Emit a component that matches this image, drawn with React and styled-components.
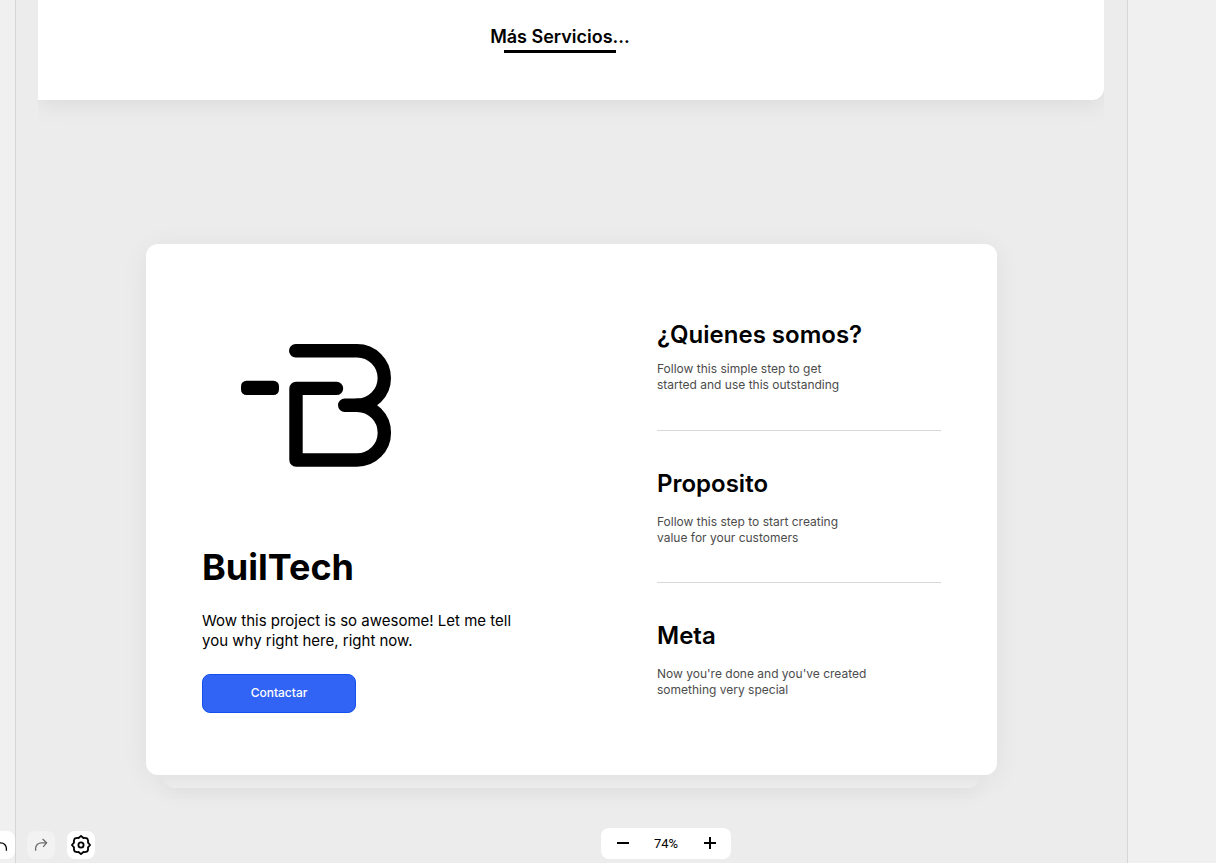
import React from "react";
import styled, { createGlobalStyle } from "styled-components";

const GlobalStyle = createGlobalStyle`
  * { box-sizing: border-box; }
  body {
    margin: 0;
    background: #f0f0f0;
    color: #000;
    font-family: Inter, "Liberation Sans", sans-serif;
  }
  h1, h2, p { margin: 0; }
  button { font-family: inherit; cursor: pointer; }
`;

const Workspace = styled.div`
  position: relative;
  min-height: 100vh;
  padding: 0 88px 0 15px;
  overflow: hidden;
`;

const Artboard = styled.main`
  min-height: 100vh;
  padding: 0 23px 75px 22px;
  background: #ececec;
  border: solid #d6d6d6;
  border-width: 0 1px;
`;

const PanelClip = styled.div`
  height: 144px;
  overflow: hidden;
`;

const ServicesPanel = styled.section`
  display: flex;
  justify-content: center;
  height: 100px;
  padding: 23px 22px 0 0;
  background: #fff;
  border-radius: 0 0 12px 0;
  box-shadow: 0 4px 24px rgba(0, 0, 0, 0.08);
`;

const ServicesLink = styled.a`
  display: flex;
  flex-direction: column;
  align-items: center;
  height: 30px;
  color: #000;
  font-size: 18px;
  font-weight: 600;
  line-height: 27px;
  text-decoration: none;
  white-space: nowrap;

  &::after {
    content: "";
    flex: none;
    width: 112px;
    height: 3px;
    background: #000;
  }
`;

const CardStack = styled.div`
  margin: 100px 107px 0 108px;
`;

const Card = styled.section`
  position: relative;
  display: grid;
  grid-template-columns: minmax(0, 1fr) 284px;
  min-height: 531px;
  padding: 0 56px;
  background: #fff;
  border-radius: 12px;
  box-shadow: 0 4px 28px rgba(0, 0, 0, 0.06);
`;

const CardShelf = styled.div`
  position: relative;
  height: 13px;
  margin: 0 17px;
  background: linear-gradient(#e4e4e4, #ececec);
  border-radius: 0 0 12px 12px;
  box-shadow: 0 6px 20px rgba(0, 0, 0, 0.06);
  clip-path: inset(0 -40px -40px);
`;

const Brand = styled.div`
  display: flex;
  flex-direction: column;
  align-items: flex-start;
  padding-top: 100px;
`;

const Logo = styled.svg`
  width: 152px;
  height: 124px;
  margin-left: 39px;
`;

const BrandName = styled.h1`
  margin-top: 75px;
  font-size: 36px;
  font-weight: 700;
  line-height: 48px;
`;

const Pitch = styled.p`
  max-width: 320px;
  margin-top: 20px;
  font-size: 15px;
  line-height: 20px;
`;

const ContactButton = styled.button`
  width: 154px;
  height: 39px;
  margin-top: 23px;
  padding: 0 0 2px;
  color: #fff;
  background: #3164f4;
  border: 1px solid #1450f0;
  border-radius: 8px;
  font-size: 12px;
  font-weight: 500;
`;

const Topics = styled.div`
  padding-top: 73px;
`;

const Topic = styled.article`
  height: 152px;
  border-bottom: ${({ $last }) => ($last ? "0" : "1px solid #d8d8d8")};

  &:first-child { height: 114px; }
  &:first-child h2 { padding-top: 0; }
  &:first-child p { margin-top: 8px; }
`;

const TopicTitle = styled.h2`
  padding-top: 35px;
  font-size: 24px;
  font-weight: 600;
  line-height: 36px;
  white-space: nowrap;
`;

const TopicText = styled.p`
  max-width: 215px;
  margin-top: 12px;
  color: #4c4c4c;
  font-size: 12px;
  line-height: 16px;
`;

const HistoryBar = styled.div`
  position: absolute;
  bottom: 4px;
  left: -13px;
  display: flex;
  gap: 12px;
`;

const ToolButton = styled.button`
  display: grid;
  place-items: center;
  width: 28px;
  height: 28px;
  padding: 0;
  color: ${({ disabled }) => (disabled ? "#6c6c6c" : "#000")};
  background: ${({ disabled }) => (disabled ? "#f2f2f2" : "#fff")};
  border: 0;
  border-radius: 8px;
`;

const ZoomBar = styled.div`
  position: absolute;
  bottom: 4px;
  left: calc(50% + 58px);
  display: grid;
  grid-template-columns: 43px 1fr 43px;
  align-items: center;
  width: 130px;
  height: 31px;
  transform: translateX(-50%);
  background: #fff;
  border-radius: 8px;
`;

const ZoomButton = styled.button`
  display: grid;
  place-items: center;
  height: 31px;
  padding: 0 0 1px;
  background: none;
  border: 0;
`;

const ZoomValue = styled.output`
  font-family: Roboto, "Liberation Sans", sans-serif;
  font-size: 13px;
  line-height: 16px;
  text-align: center;
`;

const strokeProps = { fill: "none", stroke: "currentColor" };

function RedoIcon({ flipped }) {
  return (
    <svg width="20" height="20" viewBox="0 0 20 20" {...strokeProps} strokeWidth="1.3" aria-hidden="true">
      <g transform={flipped ? "matrix(-1 0 0 1 20 0)" : undefined}>
        <path d="M4.6 15.8V13.6C4.6 10.2 7 7.8 10.5 7.8H15.5M11.6 4 15.6 7.8 12.2 11.8" />
      </g>
    </svg>
  );
}

function GearIcon() {
  return (
    <svg width="22" height="22" viewBox="0 0 22 22" {...strokeProps} strokeWidth="1.8" strokeLinejoin="round" aria-hidden="true">
      <path d="M11 1.9 13.4 4Q15.4 3.6 17.4 4.6Q18.4 6.6 18 8.6L20.1 11 18 13.4Q18.4 15.4 17.4 17.4Q15.4 18.4 13.4 18L11 20.1 8.6 18Q6.6 18.4 4.6 17.4Q3.6 15.4 4 13.4L1.9 11 4 8.6Q3.6 6.6 4.6 4.6Q6.6 3.6 8.6 4Z" />
      <circle cx="11" cy="11" r="2.6" />
    </svg>
  );
}

const topics = [
  { title: "¿Quienes somos?", lines: ["Follow this simple step to get", "started and use this outstanding"] },
  { title: "Proposito", lines: ["Follow this step to start creating", "value for your customers"] },
  { title: "Meta", lines: ["Now you're done and you've created", "something very special"] },
];

export default function App() {
  return (
    <>
      <GlobalStyle />
      <Workspace>
        <Artboard>
          <PanelClip>
            <ServicesPanel>
              <ServicesLink href="#servicios">Más Servicios...</ServicesLink>
            </ServicesPanel>
          </PanelClip>
          <CardStack>
            <Card>
              <Brand>
                <Logo viewBox="0 0 152 124" role="img" aria-label="BuilTech">
                  <g fill="none" stroke="#000" strokeWidth="13.4" strokeLinecap="round" strokeLinejoin="round">
                    <path d="M54.7 6.7H116A27.3 27.3 0 0 1 116 61.3H103.7" />
                    <path d="M116 61.3A27.3 27.3 0 0 1 116 116H55V44.4H95.5" />
                  </g>
                  <rect x="0" y="36.7" width="38" height="14.3" rx="5.5" />
                </Logo>
                <BrandName>BuilTech</BrandName>
                <Pitch>Wow this project is so awesome! Let me tell<br />you why right here, right now.</Pitch>
                <ContactButton type="button">Contactar</ContactButton>
              </Brand>
              <Topics>
                {topics.map(({ title, lines }, index) => (
                  <Topic key={title} $last={index === topics.length - 1}>
                    <TopicTitle>{title}</TopicTitle>
                    <TopicText>{lines[0]}<br />{lines[1]}</TopicText>
                  </Topic>
                ))}
              </Topics>
            </Card>
            <CardShelf />
          </CardStack>
        </Artboard>
        <HistoryBar>
          <ToolButton type="button" aria-label="Deshacer"><RedoIcon flipped /></ToolButton>
          <ToolButton type="button" aria-label="Rehacer" disabled><RedoIcon /></ToolButton>
          <ToolButton type="button" aria-label="Ajustes"><GearIcon /></ToolButton>
        </HistoryBar>
        <ZoomBar>
          <ZoomButton type="button" aria-label="Alejar">
            <svg width="12" height="12" viewBox="0 0 12 12" aria-hidden="true"><path d="M0 5h12v2H0z" /></svg>
          </ZoomButton>
          <ZoomValue>74%</ZoomValue>
          <ZoomButton type="button" aria-label="Acercar">
            <svg width="12" height="12" viewBox="0 0 12 12" aria-hidden="true"><path d="M0 5h5V0h2v5h5v2H7v5H5V7H0z" /></svg>
          </ZoomButton>
        </ZoomBar>
      </Workspace>
    </>
  );
}
